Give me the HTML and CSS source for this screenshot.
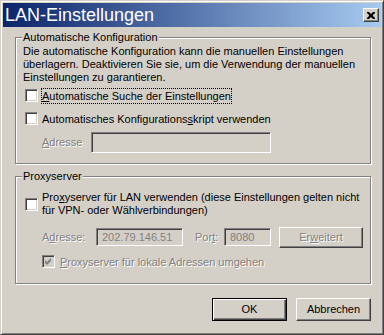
FILE: index.html
```html
<!DOCTYPE html>
<html lang="de">
<head>
<meta charset="utf-8">
<title>LAN-Einstellungen</title>
<link rel="stylesheet" href="styles.css">
</head>
<body>
<div class="window">
  <div class="titlebar">
    <span class="title">LAN-Einstellungen</span>
    <span class="close">
      <svg width="8" height="7" viewBox="0 0 8 7"><path d="M0 0h2l2 2l2-2h2v1l-2 2v1l2 2v1h-2l-2-2l-2 2h-2v-1l2-2v-1l-2-2z" fill="#000"/></svg>
    </span>
  </div>
  <div class="content">
    <fieldset class="group g1">
      <legend>Automatische Konfiguration</legend>
      <p class="desc">Die automatische Konfiguration kann die manuellen Einstellungen überlagern. Deaktivieren Sie sie, um die Verwendung der manuellen Einstellungen zu garantieren.</p>
      <div class="row check r1">
        <span class="box"></span>
        <span class="lbl focus"><u>A</u>utomatische Suche der Einstellungen</span>
      </div>
      <div class="row check r2">
        <span class="box"></span>
        <span class="lbl">Automatisches Konfigurations<u>s</u>kript verwenden</span>
      </div>
      <div class="row field r-addr">
        <span class="flabel disabled w-addr"><u>A</u>dresse</span>
        <span class="input in-script"></span>
      </div>
    </fieldset>
    <fieldset class="group g2">
      <legend>Proxyserver</legend>
      <div class="row check multi">
        <span class="box"></span>
        <span class="lbl">Pro<u>x</u>yserver für LAN verwenden (diese Einstellungen gelten nicht<br>für VPN- oder Wählverbindungen)</span>
      </div>
      <div class="row field r-proxy">
        <span class="flabel disabled w-paddr">A<u>d</u>resse:</span>
        <span class="input in-addr">202.79.146.51</span>
        <span class="flabel disabled w-port">Por<u>t</u>:</span>
        <span class="input in-port">8080</span>
        <span class="btn btn-adv disabled">Er<u>w</u>eitert</span>
      </div>
      <div class="row check r-bypass">
        <span class="box box-dis">
          <svg width="7" height="7" viewBox="0 0 7 7"><path d="M6 0v3l-4 4l-2-2v-3l2 2z" fill="#808080"/></svg>
        </span>
        <span class="lbl disabled"><u>P</u>roxyserver für lokale Adressen umgehen</span>
      </div>
    </fieldset>
    <div class="buttons">
      <span class="btn btn-default">OK</span>
      <span class="btn">Abbrechen</span>
    </div>
  </div>
</div>
</body>
</html>
```
FILE: styles.css
```css
html, body {
  margin: 0;
  padding: 0;
  background: #d4d0c8;
}
body {
  font-family: "Liberation Sans", Arial, sans-serif;
  font-size: 11px;
  line-height: 13px;
  color: #000;
}
.window {
  width: 384px;
  height: 335px;
  box-sizing: border-box;
  background: #d4d0c8;
  border: 1px solid;
  border-color: #d4d0c8 #404040 #404040 #d4d0c8;
  box-shadow: inset 1px 1px #fff, inset -1px -1px #808080;
  padding: 2px;
  display: flex;
  flex-direction: column;
}
.titlebar {
  height: 24px;
  flex: none;
  background: linear-gradient(to right, #0a246a, #a6caf0);
  display: flex;
  align-items: center;
  justify-content: space-between;
  padding: 0 2px 0 2px;
}
.title {
  color: #fff;
  font-size: 18px;
  line-height: 24px;
}
.close {
  width: 16px;
  height: 14px;
  box-sizing: border-box;
  background: #d4d0c8;
  border: 1px solid;
  border-color: #fff #404040 #404040 #fff;
  box-shadow: inset -1px -1px #808080;
  display: flex;
  align-items: center;
  justify-content: center;
}
.close svg { display: block; }
.content {
  flex: 1;
  display: flex;
  flex-direction: column;
}
.group {
  margin: 0 10px 0 12px;
  padding: 1px 6px 0 6px;
  border: 1px solid #808080;
  box-shadow: inset 1px 1px #fff, 1px 1px #fff;
  min-width: 0;
}
.group legend {
  padding: 0 1px;
  background: #d4d0c8;
  line-height: 13px;
}
.g1 { margin-top: 4px; padding-bottom: 10px; }
.g2 { margin-top: 6px; padding-bottom: 13px; }
.desc {
  margin: 0 0 0 1px;
}
.row {
  display: flex;
}
.check {
  height: 16px;
  align-items: flex-start;
  margin-left: 3px;
}
.box {
  width: 13px;
  height: 13px;
  flex: none;
  box-sizing: border-box;
  margin-top: 1px;
  background: #fff;
  border: 1px solid;
  border-color: #808080 #fff #fff #808080;
  box-shadow: inset 1px 1px #404040, inset -1px -1px #d4d0c8;
  display: flex;
  align-items: center;
  justify-content: center;
}
.box-dis { background: #d4d0c8; }
.box svg { display: block; }
.lbl {
  margin-left: 3px;
  padding: 0 1px;
  line-height: 16px;
  height: 16px;
  box-sizing: border-box;
  white-space: nowrap;
}
.focus {
  outline: 1px dotted #000;
  outline-offset: -1px;
}
.r1 { margin-top: 4px; }
.r2 { margin-top: 7px; }
.multi {
  height: 26px;
  align-items: center;
  margin-top: 7px;
}
.multi .box { margin-top: 0; }
.multi .lbl { height: 26px; line-height: 13px; padding-top: 0; }
.field {
  margin-left: 20px;
  align-items: center;
}
.r-addr { margin-top: 5px; height: 21px; }
.flabel { flex: none; }
.w-addr { width: 49px; }
.w-paddr { width: 54px; }
.w-port { width: 29px; margin-left: 12px; }
.disabled {
  color: #808080;
  text-shadow: 1px 1px #fff;
}
.input {
  box-sizing: border-box;
  flex: none;
  background: #d4d0c8;
  border: 1px solid;
  border-color: #808080 #fff #fff #808080;
  box-shadow: inset 1px 1px #404040, inset -1px -1px #d4d0c8;
  color: #808080;
  padding-left: 5px;
  line-height: 16px;
}
.in-script { width: 180px; height: 21px; }
.r-proxy { margin-top: 10px; height: 21px; align-items: flex-start; }
.r-proxy .flabel { line-height: 21px; }
.in-addr { width: 87px; height: 18px; margin-top: 1px; }
.in-port { width: 47px; height: 18px; margin-top: 1px; }
.btn {
  box-sizing: border-box;
  flex: none;
  width: 75px;
  height: 23px;
  border: 1px solid;
  border-color: #fff #404040 #404040 #fff;
  box-shadow: inset -1px -1px #808080;
  background: #d4d0c8;
  display: flex;
  align-items: center;
  justify-content: center;
}
.btn-adv { width: 84px; height: 21px; margin-left: 8px; }
.btn-default {
  border: 1px solid #000;
  box-shadow: inset 1px 1px #fff, inset -1px -1px #404040, inset -2px -2px #808080;
}
.r-bypass { margin-left: 20px; margin-top: 6px; }
.r-bypass .lbl { margin-left: 4px; }
.buttons {
  display: flex;
  justify-content: flex-end;
  gap: 9px;
  margin-top: 14px;
  padding-right: 10px;
}
u { text-decoration: underline; text-underline-offset: 1px; }
```
